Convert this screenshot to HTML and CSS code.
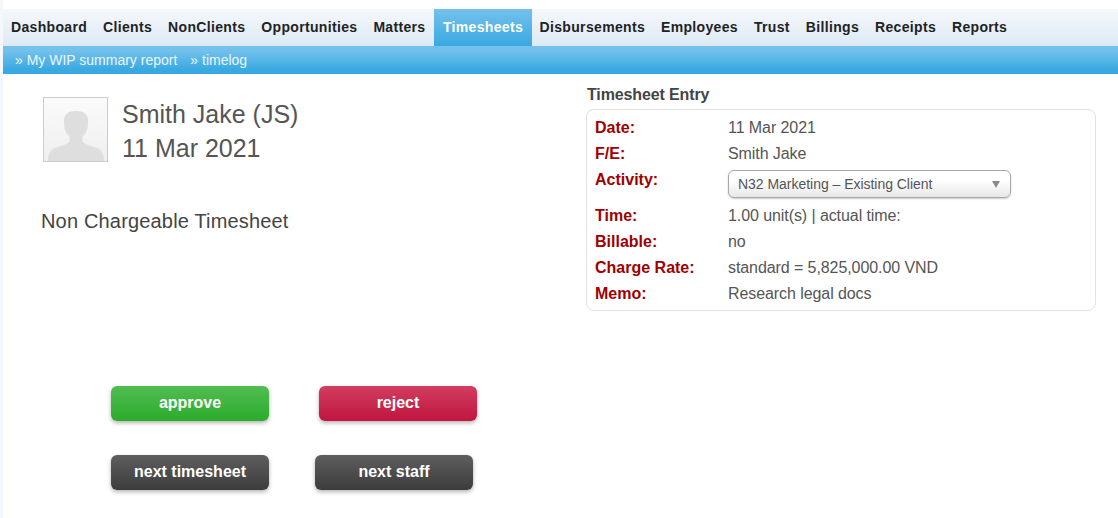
FILE: index.html
```html
<!DOCTYPE html>
<html lang="en">
<head>
<meta charset="utf-8">
<title>Timesheet Entry</title>
<link rel="stylesheet" href="styles.css">
</head>
<body>
<div class="page">
  <nav class="nav">
    <a class="nav-item" href="#">Dashboard</a>
    <a class="nav-item" href="#">Clients</a>
    <a class="nav-item" href="#">NonClients</a>
    <a class="nav-item" href="#">Opportunities</a>
    <a class="nav-item" href="#">Matters</a>
    <a class="nav-item active" href="#">Timesheets</a>
    <a class="nav-item" href="#">Disbursements</a>
    <a class="nav-item" href="#">Employees</a>
    <a class="nav-item" href="#">Trust</a>
    <a class="nav-item" href="#">Billings</a>
    <a class="nav-item" href="#">Receipts</a>
    <a class="nav-item" href="#">Reports</a>
  </nav>
  <div class="subnav">
    <a class="sub-item" href="#">» My WIP summary report</a>
    <a class="sub-item" href="#">» timelog</a>
  </div>
  <main class="content">
    <section class="left">
      <div class="person">
        <svg class="avatar" viewBox="0 0 65 65" aria-hidden="true">
          <defs>
            <linearGradient id="avatarBg" x1="0" y1="0" x2="0" y2="1">
              <stop offset="0" stop-color="#fbfbfb"/>
              <stop offset="1" stop-color="#efefef"/>
            </linearGradient>
          </defs>
          <rect x="0.5" y="0.5" width="64" height="64" fill="url(#avatarBg)" stroke="#cccccc"/>
          <path d="M5 64c0-7 2-11 7-13 5-2 11-3 14-6 1-2 1-4 0-6-3-3-5-7-5-12-1-9 3-13 12-13s13 4 12 13c0 5-2 9-5 12-1 2-1 4 0 6 3 3 9 4 14 6 5 2 7 6 7 13z" fill="#dedede"/>
        </svg>
        <div class="person-text">
          <div class="person-line">Smith Jake (JS)</div>
          <div class="person-line">11 Mar 2021</div>
        </div>
      </div>
      <h2 class="status">Non Chargeable Timesheet</h2>
    </section>
    <section class="right">
      <h3 class="entry-title">Timesheet Entry</h3>
      <div class="entry-box">
        <div class="row"><span class="label">Date:</span><span class="value">11 Mar 2021</span></div>
        <div class="row"><span class="label">F/E:</span><span class="value">Smith Jake</span></div>
        <div class="row row-select"><span class="label">Activity:</span>
          <span class="select"><span class="select-text">N32 Marketing – Existing Client</span><span class="caret"></span></span>
        </div>
        <div class="row"><span class="label">Time:</span><span class="value">1.00 unit(s) | actual time:</span></div>
        <div class="row"><span class="label">Billable:</span><span class="value">no</span></div>
        <div class="row"><span class="label">Charge Rate:</span><span class="value">standard = 5,825,000.00 VND</span></div>
        <div class="row"><span class="label">Memo:</span><span class="value">Research legal docs</span></div>
      </div>
    </section>
  </main>
  <div class="actions">
    <div class="action-row gap-wide">
      <button class="btn green">approve</button>
      <button class="btn red">reject</button>
    </div>
    <div class="action-row gap-narrow">
      <button class="btn dark">next timesheet</button>
      <button class="btn dark">next staff</button>
    </div>
  </div>
</div>
</body>
</html>
```
FILE: styles.css
```css
* { box-sizing: border-box; }
html, body { margin: 0; padding: 0; height: 100%; }
body {
  background: #f4f7fb;
  font-family: "Liberation Sans", Arial, sans-serif;
  color: #4a4a4a;
  overflow: hidden;
}
.page {
  margin-left: 3px;
  padding-top: 9px;
  height: 100%;
  background: #fff;
}
.nav {
  display: flex;
  height: 37px;
  background: linear-gradient(#f5f8fb, #dceaf5);
}
.nav-item {
  display: flex;
  align-items: center;
  padding: 0 8px 2px;
  font-size: 14px;
  font-weight: 700;
  letter-spacing: 0.33px;
  color: #222;
  text-decoration: none;
}
.nav-item.active {
  margin-left: 1px;
  padding: 0 8.5px 2px;
  color: #fff;
  background: linear-gradient(#74c1ec, #39a9e2);
}
.subnav {
  display: flex;
  gap: 13px;
  align-items: center;
  height: 28px;
  padding-left: 12px;
  background: linear-gradient(#74c1ec 0, #74c1ec 15%, #39a9e2 85%);
}
.sub-item {
  color: #e9f6fe;
  font-size: 14px;
  text-decoration: none;
}
.content {
  display: flex;
  height: 237px;
}
.left { width: 584px; padding: 23px 0 0 38px; }
.person { display: flex; gap: 14px; }
.avatar { width: 65px; height: 65px; margin-left: 2px; flex: none; }
.person-text { font-size: 25px; color: #555; }
.person-line { height: 34px; line-height: 34px; }
.status {
  margin: 44px 0 0;
  font-size: 20px;
  font-weight: 400;
  line-height: 24px;
  letter-spacing: 0.17px;
  color: #444;
}
.right { width: 510px; margin-left: -1px; }
.entry-title {
  margin: 0;
  padding: 11px 0 0 1px;
  height: 35px;
  font-size: 16px;
  line-height: 20px;
  font-weight: 700;
  letter-spacing: -0.13px;
  color: #444;
}
.entry-box {
  height: 202px;
  padding: 5px 8px;
  border: 1px solid #e2e2e2;
  border-radius: 8px;
  background: #fff;
}
.row {
  display: flex;
  height: 26px;
  align-items: center;
  font-size: 16px;
}
.row-select { height: 36px; align-items: flex-start; }
.row-select .label { line-height: 26px; }
.label { width: 133px; flex: none; font-weight: 700; color: #a00000; }
.value { color: #555; letter-spacing: -0.08px; }
.select {
  position: relative;
  display: flex;
  align-items: center;
  width: 283px;
  height: 28px;
  margin-top: 3px;
  padding-left: 9px;
  font-size: 14px;
  letter-spacing: -0.03px;
  color: #555;
  border: 1px solid #a8a8a8;
  border-radius: 6px;
  background: linear-gradient(#fff, #fff 35%, #e8e8e8);
  box-shadow: 0 1px 2px rgba(0,0,0,.2);
}
.caret {
  position: absolute;
  right: 10px;
  top: 10px;
  width: 0;
  height: 0;
  border-left: 4px solid transparent;
  border-right: 4px solid transparent;
  border-top: 7px solid #8a8a8a;
}
.actions { padding: 75px 0 0 108px; }
.action-row { display: flex; height: 35px; margin-bottom: 34px; }
.gap-wide { gap: 50px; }
.gap-narrow { gap: 46px; }
.btn {
  width: 158px;
  height: 35px;
  padding: 0 0 1px;
  border: 0;
  border-radius: 6px;
  font-family: inherit;
  font-size: 16px;
  font-weight: 700;
  color: #fff;
  box-shadow: 0 2px 4px rgba(0,0,0,.3);
}
.green { background: linear-gradient(#52bd52, #2bab2b); }
.red { background: linear-gradient(#d23e5f, #c01540); }
.dark { background: linear-gradient(#5e5e5e, #3c3c3c); }
```
